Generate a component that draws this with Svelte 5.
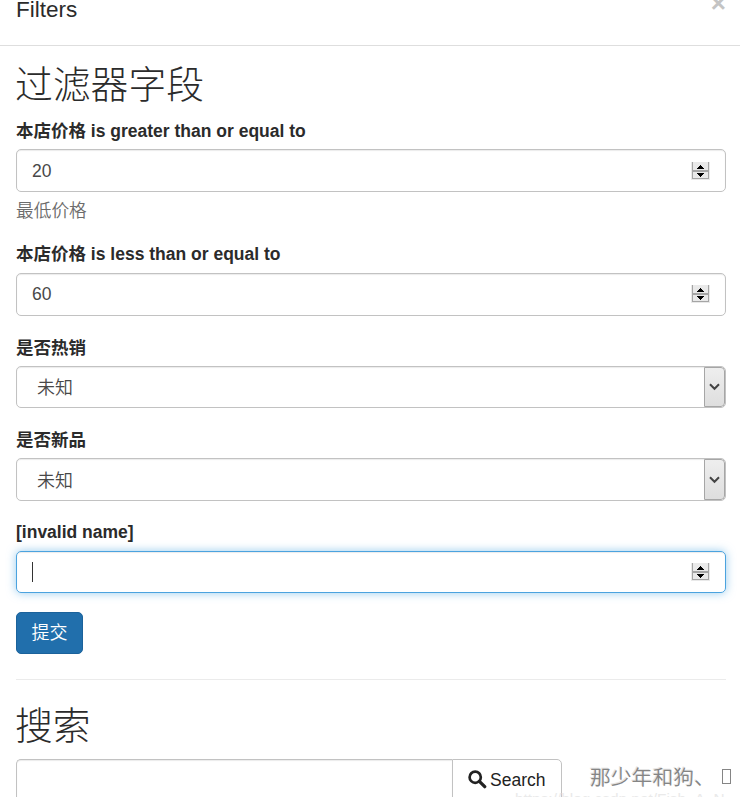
<script>
  const arrowUp = 'M9 3h1v1h1v1h1v1h1v1H6V6h1V5h1V4h1z';
  const arrowDown = 'M6 11h7v1h-1v1h-1v1h-1v1H9v-1H8v-1H7v-1H6z';
  const fields = [
    { kind: 'number', label: '本店价格 is greater than or equal to', value: '20', help: '最低价格', h: 43, gap: 19, lead: 30 },
    { kind: 'number', label: '本店价格 is less than or equal to', value: '60', h: 43, gap: 20, lead: 31, tight: true },
    { kind: 'select', label: '是否热销', value: '未知', h: 42, gap: 20, lead: 30 },
    { kind: 'select', label: '是否新品', value: '未知', h: 43, gap: 19, lead: 30 },
    { kind: 'number', label: '[invalid name]', value: '', focus: true, h: 42, gap: 19, lead: 31, tight: true }
  ];
</script>

<div class="modal">
  <header>
    <h4>Filters</h4>
    <span class="close">×</span>
  </header>
  <main>
    <h2>过滤器字段</h2>
    {#each fields as f}
      <div class="group" style="margin-bottom: {f.gap}px">
        <div class="label" style="height: {f.lead}px">{f.label}</div>
        <div class="control" class:select={f.kind === 'select'} class:focus={f.focus} class:tight={f.tight} style="height: {f.h}px">
          <span class="value">{f.value}{#if f.focus}<i class="caret"></i>{/if}</span>
          {#if f.kind === 'number'}
            <svg class="spin" width="19" height="18" viewBox="0 0 19 18" shape-rendering="crispEdges">
              <rect width="19" height="18" fill="#e9e9e9" />
              <rect x="1" width="1" height="17" fill="#a5a5a5" />
              <rect x="17" width="1" height="17" fill="#a5a5a5" />
              <rect x="1" y="8" width="17" height="2" fill="#a5a5a5" />
              <rect x="1" y="16" width="17" height="1" fill="#a5a5a5" />
              <path d={arrowUp} fill="#000" /><path d={arrowDown} fill="#000" />
            </svg>
          {:else}
            <span class="drop">
              <svg width="11" height="8" viewBox="0 0 11 8"><path d="M1 1.2L5.5 5.8L10 1.2" fill="none" stroke="#444" stroke-width="2" /></svg>
            </span>
          {/if}
        </div>
        {#if f.help}<div class="help">{f.help}</div>{/if}
      </div>
    {/each}
    <button class="submit">提交</button>
    <hr />
    <h2 class="second">搜索</h2>
    <div class="search">
      <div class="query"></div>
      <button class="go">
        <svg width="19" height="19" viewBox="0 0 19 19"><circle cx="7.2" cy="7.2" r="5.6" fill="none" stroke="#222" stroke-width="2.7" /><path d="M11.4 11.4L16.7 16.7" stroke="#222" stroke-width="3.3" stroke-linecap="round" /></svg>
        <span>Search</span>
      </button>
    </div>
  </main>
  <div class="mark">那少年和狗、<i></i></div>
  <div class="url">https://blog.csdn.net/Fish_A_N</div>
</div>

<style>
  :global(body) { background: #fff; overflow: hidden; }
  .modal {
    position: relative;
    box-sizing: border-box;
    width: 740px;
    height: 797px;
    overflow: hidden;
    color: #2b2b2b;
    font: 17.5px/25px "Liberation Sans", "Noto Sans CJK SC", sans-serif;
  }
  header {
    box-sizing: border-box;
    height: 46px;
    padding: 0 14px 0 16px;
    display: flex;
    justify-content: space-between;
    border-bottom: 1px solid #dedede;
  }
  h4 { margin: -3px 0 0; font-size: 22.5px; line-height: 25px; font-weight: 400; }
  .close { margin-top: -9px; font-size: 26px; line-height: 25px; font-weight: 700; color: #c4c4c4; }
  main { padding: 0 14px 0 16px; }
  h2 {
    margin: 0 0 0 -1px;
    box-sizing: border-box;
    padding-top: 19px;
    height: 73px;
    font-size: 37.8px;
    line-height: 40px;
    font-weight: 300;
  }
  .label { font-weight: 700; }
  .control {
    box-sizing: border-box;
    display: flex;
    align-items: center;
    justify-content: space-between;
    border: 1px solid #c2c2c2;
    border-radius: 5px;
    padding: 0 15.5px 0 15px;
    box-shadow: inset 0 1px 1px rgba(0, 0, 0, .08);
    color: #484848;
    overflow: hidden;
  }
  .value { height: 25px; padding-top: 1px; }
  .control.select { padding: 0 0 0 20px; font-size: 18px; font-weight: 350; }
  .select .value { padding-top: 3px; }
  .control.focus {
    border-color: #4ba3df;
    box-shadow: inset 0 1px 1px rgba(0, 0, 0, .08), 0 0 10px rgba(82, 168, 226, .6);
  }
  .control.tight { padding-bottom: 2px; }
  .caret { display: block; width: 1px; height: 20px; margin-top: 3px; background: #333; }
  .spin { display: block; margin-top: 1px; }
  .drop {
    box-sizing: border-box;
    align-self: stretch;
    width: 21px;
    display: flex;
    align-items: center;
    justify-content: center;
    border: 1px solid #a6a6a6;
    border-radius: 0 4px 4px 0;
    background: linear-gradient(#eee, #dedede);
  }
  .help { height: 24px; padding-top: 7px; color: #6c6c6c; font-size: 17.7px; font-weight: 350; }
  button { font: inherit; }
  .submit {
    display: block;
    width: 67px;
    height: 42px;
    padding: 1px 0 0;
    color: #fff;
    font-size: 18px;
    font-weight: 350;
    background: #216fac;
    border: 1px solid #1b629b;
    border-radius: 5px;
  }
  hr { height: 1px; margin: 25px 0 0; border: 0; background: #ebebeb; }
  h2.second { padding-top: 26px; height: 79px; }
  .search { display: flex; height: 43px; }
  .query {
    box-sizing: border-box;
    width: 436px;
    border: 1px solid #c2c2c2;
    border-right: 0;
    border-radius: 5px 0 0 5px;
    box-shadow: inset 0 1px 1px rgba(0, 0, 0, .08);
  }
  .go {
    box-sizing: border-box;
    width: 110px;
    padding: 0 0 3px 15px;
    display: flex;
    align-items: center;
    gap: 3px;
    color: #222;
    background: #fff;
    border: 1px solid #c2c2c2;
    border-radius: 0 5px 5px 0;
  }
  .go span { padding-top: 2px; }
  .mark {
    position: absolute;
    left: 590px;
    top: 761px;
    display: flex;
    align-items: center;
    font: 350 20.8px/30px "Noto Sans CJK SC", sans-serif;
    white-space: nowrap;
    color: #858585;
    text-shadow: -1px -1px #e4e4e4;
  }
  .mark i { width: 7px; height: 13px; margin: 1px 0 0 7px; border: 1px solid #858585; }
  .url {
    position: absolute;
    left: 515px;
    top: 789px;
    font: 15.4px/20px "Liberation Sans", sans-serif;
    color: #eaeaea;
    white-space: nowrap;
  }
</style>
